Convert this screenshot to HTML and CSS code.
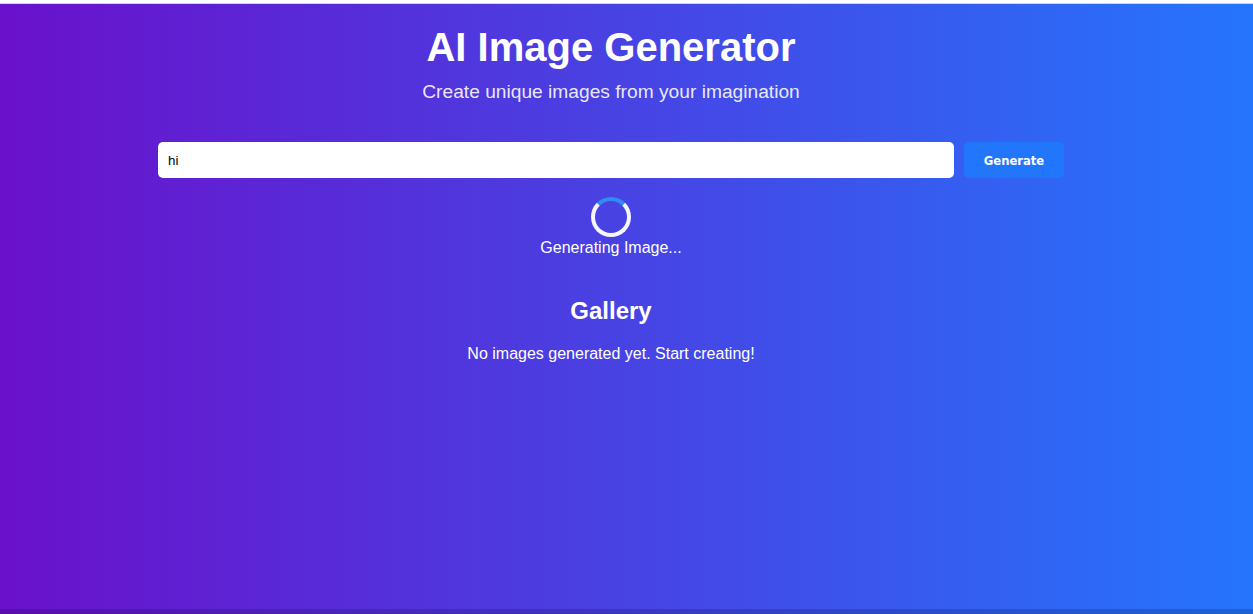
FILE: index.html
```html
<!DOCTYPE html>
<html lang="en">
<head>
<meta charset="utf-8">
<title>AI Image Generator</title>
<link rel="stylesheet" href="styles.css">
</head>
<body>
<div class="topbar"></div>
<main class="page">
  <div class="content">
    <h1 class="title">AI Image Generator</h1>
    <p class="subtitle">Create unique images from your imagination</p>
    <form class="prompt-form">
      <input class="prompt-input" type="text" value="hi">
      <button class="generate-btn" type="button">Generate</button>
    </form>
    <div class="loader">
      <div class="spinner"></div>
      <p class="loader-text">Generating Image...</p>
    </div>
    <section class="gallery">
      <h2 class="gallery-title">Gallery</h2>
      <p class="gallery-empty">No images generated yet. Start creating!</p>
    </section>
  </div>
</main>
<div class="bottombar"></div>
</body>
</html>
```
FILE: styles.css
```css
* { box-sizing: border-box; }
html, body { margin: 0; padding: 0; }
body {
  font-family: "Liberation Sans", Arial, sans-serif;
  background: #ffffff;
  overflow: hidden;
}
.topbar {
  height: 4px;
  background: #ffffff;
  border-bottom: 1px solid #d6d6d6;
}
.page {
  height: 605px;
  background: linear-gradient(to right, #6a11cb, #2575fc);
  color: #ffffff;
  padding: 20px 31px 0 0;
}
.content {
  display: flex;
  flex-direction: column;
  align-items: center;
  text-align: center;
}
.title {
  margin: 0;
  font-size: 40px;
  line-height: 46px;
  font-weight: bold;
}
.subtitle {
  margin: 11px 0 0;
  font-size: 19.2px;
  line-height: 22px;
  color: rgba(255, 255, 255, 0.9);
}
.prompt-form {
  margin-top: 39px;
  display: flex;
  gap: 10px;
  width: 906px;
  height: 36px;
}
.prompt-input {
  flex: 1;
  height: 36px;
  border: none;
  border-radius: 5px;
  padding: 1px 10px 0;
  font-family: "Liberation Sans", Arial, sans-serif;
  font-size: 13.33px;
  color: #000000;
  background: #ffffff;
  outline: none;
}
.generate-btn {
  width: 100px;
  height: 36px;
  border: none;
  border-radius: 5px;
  padding: 2px 0 0;
  background: #2276fc;
  color: #ffffff;
  font-family: "DejaVu Sans", Verdana, sans-serif;
  font-weight: bold;
  font-size: 11.6px;
  cursor: pointer;
}
.loader {
  margin-top: 19px;
  display: flex;
  flex-direction: column;
  align-items: center;
}
.spinner {
  width: 40px;
  height: 40px;
  border: 4px solid #f5f5ff;
  border-top-color: #2f8cf0;
  border-radius: 50%;
}
.loader-text {
  margin: 2px 0 0;
  font-size: 16px;
  line-height: 18px;
}
.gallery {
  margin-top: 40px;
  display: flex;
  flex-direction: column;
  align-items: center;
}
.gallery-title {
  margin: 0;
  font-size: 24px;
  line-height: 28px;
  font-weight: bold;
}
.gallery-empty {
  margin: 20px 0 0;
  font-size: 16px;
  line-height: 18px;
}
.bottombar {
  height: 5px;
  background: linear-gradient(rgba(0, 0, 0, 0.17), rgba(0, 0, 0, 0.17)),
              linear-gradient(to right, #6a11cb, #2575fc);
}
```
